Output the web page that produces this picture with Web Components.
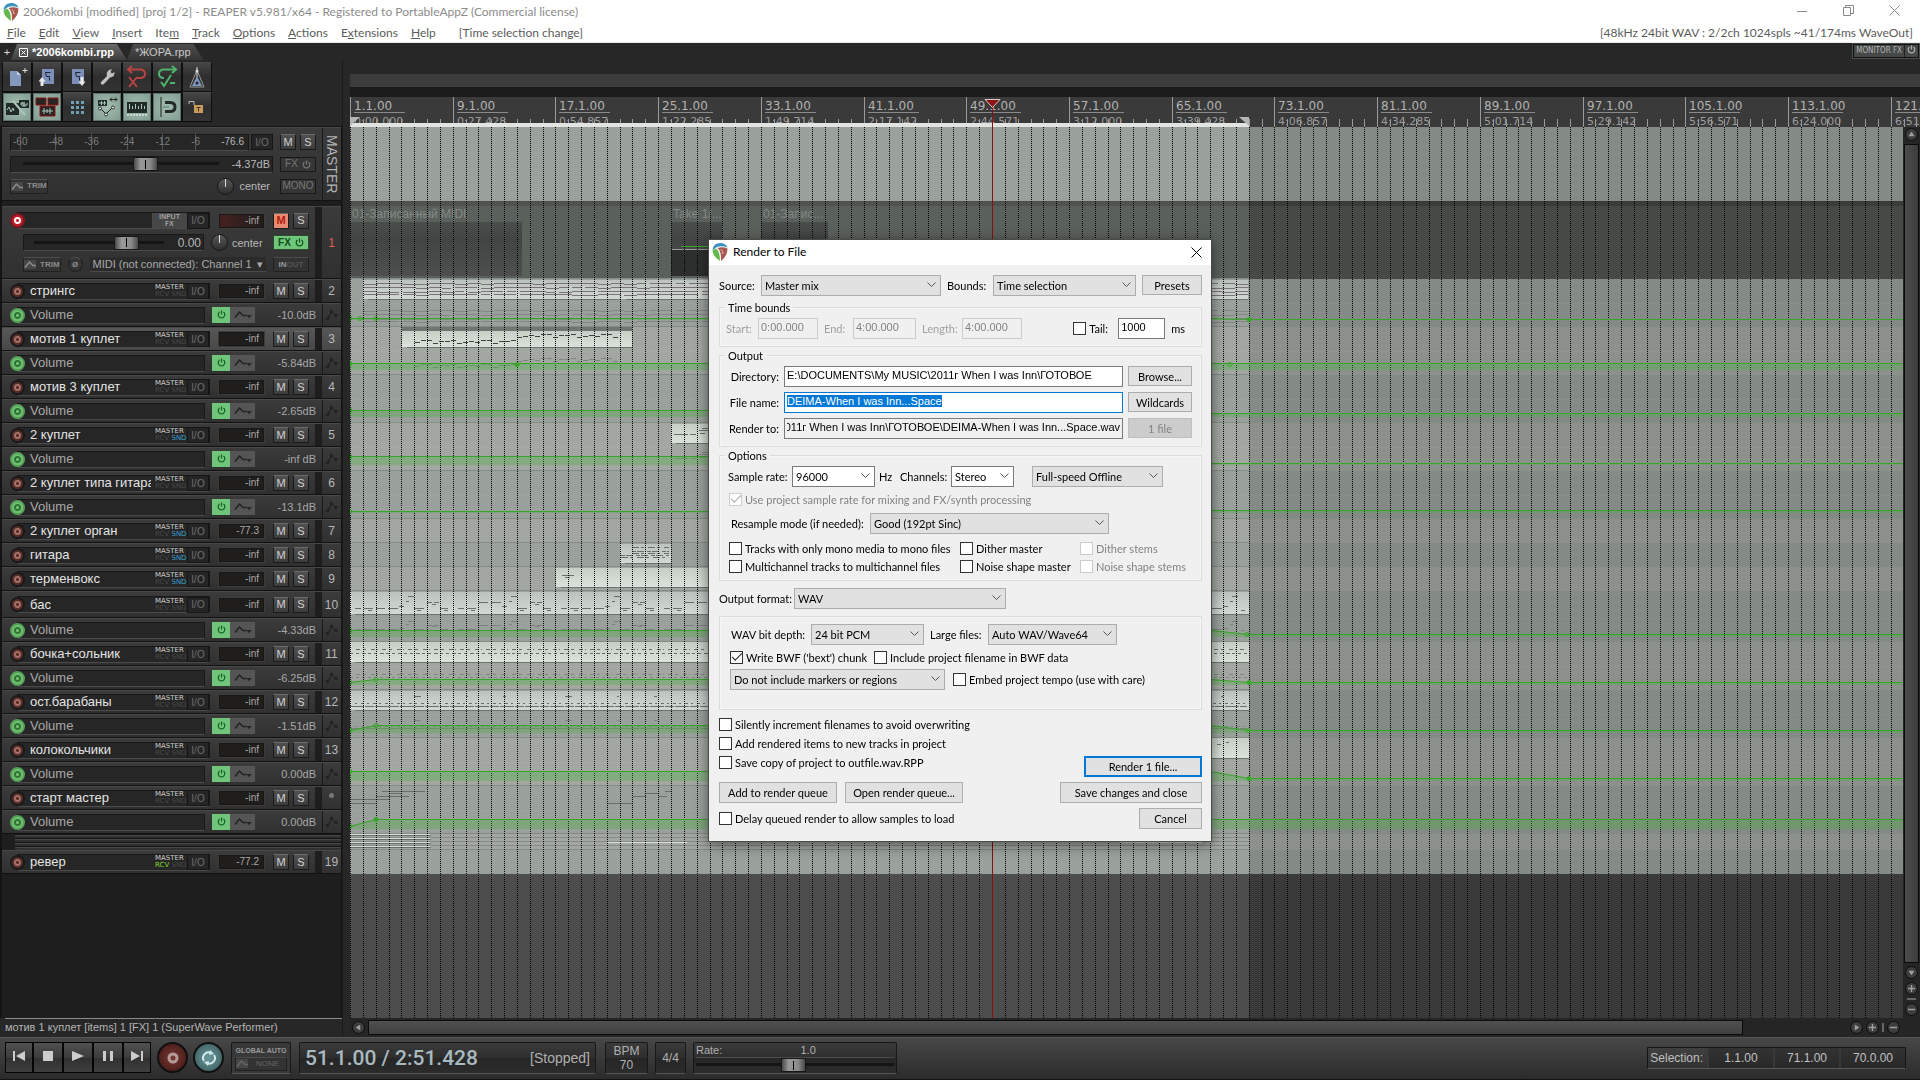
<!DOCTYPE html>
<html lang="en">
<head>
<meta charset="utf-8">
<title>REAPER - Render to File</title>
<style>
  html, body { height: 100%; margin: 0; }
  body { background: #272727; font-family: "Liberation Sans", sans-serif; overflow: hidden; }
</style>
</head>
<body>
<daw-app></daw-app>

<script>
// ---------- project data ----------
const BAR_STEP = 12.84;
const SEL_END = 899;         // px, end of the time selection
const CURSOR_X = 642;

const TRACKS = [
  { n: 1, h: 73, first: true },
  { n: 2, name: 'стрингс', env: { value: '-10.0dB', y: 15, right: 16, floor: 17, dots: [[0, 15], [10, 15], [26, 15], [899, 16, 1]] } },
  { n: 3, name: 'мотив 1 куплет', selected: true, env: { value: '-5.84dB', y: 12, right: 12, floor: 19, dots: [[0, 12, 1], [167, 13, 1], [880, 13]] } },
  { n: 4, name: 'мотив 3 куплет', env: { value: '-2.65dB', y: 11, right: 14, floor: 18, dots: [[0, 11]] } },
  { n: 5, name: '2 куплет', route: 'snd', env: { value: '-inf dB', y: 9, right: 16, floor: 18, dots: [[0, 9]] } },
  { n: 6, name: '2 куплет типа гитара', env: { value: '-13.1dB', y: 16, right: 15, floor: 18, dots: [[0, 16]] } },
  { n: 7, name: '2 куплет орган', route: 'snd', meter: '-77.3' },
  { n: 8, name: 'гитара', route: 'snd' },
  { n: 9, name: 'терменвокс', route: 'snd' },
  { n: 10, name: 'бас', h: 27, env: { value: '-4.33dB', y: 12, right: 16, floor: 19, dots: [[0, 12], [897, 16]] } },
  { n: 11, name: 'бочка+сольник', env: { value: '-6.25dB', start: 16, y: 13, right: 16, floor: 19, dots: [[0, 16], [26, 13], [899, 16, 1]] } },
  { n: 12, name: 'ост.барабаны', env: { value: '-1.51dB', start: 16, y: 11, right: 16, floor: 19, dots: [[0, 16, 1], [26, 11], [898, 16]] } },
  { n: 13, name: 'колокольчики', env: { value: '0.00dB', y: 9, right: 16, floor: 19, dots: [[0, 9], [899, 16, 1]] } },
  { n: '', name: 'старт мастер', folder: true, env: { value: '0.00dB', start: 16, y: 9, right: 9, floor: 19, dots: [[0, 16], [26, 9, 1]] } },
  { collapsed: true, h: 16 },
  { n: 19, name: 'ревер', route: 'rcv', meter: '-77.2' }
];

// ---------- shared pieces ----------
const LOGO = `<svg width="16" height="20" viewBox="0 0 16 20">
  <path d="M.5 7Q2 1 8 1Q14 1 15.500 5.500Q10 3.500 5 5L1 8Z" fill="#3b93c4"/>
  <path d="M.500 8.500L4 6.500Q8 9 8 19Q.5 14 .5 8.500Z" fill="#62b84a"/>
  <path d="M5.500 6Q11 4.500 15.500 6.500Q15.500 14 9 19Q9.500 9 5.500 6Z" fill="#a8584e"/>
  <path d="M9 7.500Q11 9 11 12" stroke="#e4c9c4" fill="none"/></svg>`;
const POWER = `<svg width="9" height="9" viewBox="0 0 9 9" fill="none" stroke="currentColor" stroke-width="1.200"><path d="M2.500 2A3.300 3.300 0 1 0 6.500 2M4.500 .5V4.500"/></svg>`;
const SHAPE = `<svg width="12" height="9" viewBox="0 0 12 9" fill="none" stroke="currentColor" stroke-width="1.500"><path d="M1 7.500L5.500 2L9 5.500H12"/></svg>`;
const NODES = `<svg width="12" height="12" viewBox="0 0 12 12" fill="none" stroke="#1c1c1c"><path d="M.5 8.500h2v2h-2zM4.500 1.500h2v2h-2zM9 5.500h2v2H9zM2.500 8.500L5 4M7 4L9 6"/></svg>`;

class UiElement extends HTMLElement {
  constructor() {
    super();
    this.attachShadow({ mode: 'open' });
  }
  connectedCallback() {
    this.shadowRoot.innerHTML = `
      <style>
        * { box-sizing: border-box; }
        button, input, select { font: inherit; color: inherit; margin: 0; }
        button { padding: 0; cursor: pointer; white-space: nowrap; }
        ${this.css()}
      </style>
      ${this.html()}`;
    this.ready();
  }
  css() { return ':host { display: block; }'; }
  html() { return '<slot></slot>'; }
  ready() {}
}

// ---------- window chrome ----------
class TitleBar extends UiElement {
  css() {
    return `
      :host { display: flex; align-items: center; height: 23px; padding: 0 3px; gap: 4px; background: #fff; color: #8c8c8c; font: 12px/16px "Lato", sans-serif; }
      span { flex: 1; }
      div { display: flex; }
      button { width: 46px; height: 20px; border: 0; background: none; color: #8a8a8a; }`;
  }
  html() {
    return `${LOGO}<span><slot></slot></span><div>
      <button aria-label="Minimize"><svg width="11" height="11" stroke="currentColor"><path d="M0 6.500H10"/></svg></button>
      <button aria-label="Restore"><svg width="11" height="11" stroke="currentColor" fill="none"><path d="M.5 2.500h7v8h-7zM2.500 2.500v-2h8v8h-3"/></svg></button>
      <button aria-label="Close"><svg width="11" height="11" stroke="currentColor"><path d="M.5 .5L10.500 10.500M10.500 .5L.5 10.500"/></svg></button></div>`;
  }
}

class MenuBar extends UiElement {
  css() {
    return `
      :host { display: flex; justify-content: space-between; height: 20px; padding: 0 7px; background: #fff; color: #5c5c5c; font: 12px/20px "Lato", sans-serif; border-bottom: 1px solid #e8eae8; }
      nav { display: flex; gap: 13px; }
      a { color: inherit; text-decoration: none; }
      span { margin-left: 10px; }`;
  }
  html() {
    const items = ['<u>F</u>ile', '<u>E</u>dit', '<u>V</u>iew', '<u>I</u>nsert', 'Ite<u>m</u>', '<u>T</u>rack', '<u>O</u>ptions', '<u>A</u>ctions', 'E<u>x</u>tensions', '<u>H</u>elp'];
    return `<nav>${items.map(i => `<a href="#">${i}</a>`).join('')}<span>[Time selection change]</span></nav>
      <div>[48kHz 24bit WAV : 2/2ch 1024spls ~41/174ms WaveOut]</div>`;
  }
}

class ProjectTabs extends UiElement {
  css() {
    return `
      :host { display: flex; height: 17px; padding: 1px 1px 0 3px; background: #272727; color: #c9c9c9; font: 11px/15px "Liberation Sans", sans-serif; }
      .add { border: 0; background: none; color: #ddd; width: 8px; }
      .tab { border: 0; height: 16px; display: flex; align-items: center; gap: 4px; padding: 0 13px 0 8px; background: linear-gradient(#4c4c4c, #363636); clip-path: polygon(6px 0, calc(100% - 10px) 0, 100% 100%, 0 100%); }
      .tab.on { background: linear-gradient(#6a6a6a, #3e3e3e); color: #fff; font-weight: bold; }
      .mon { margin-left: auto; display: flex; height: 14px; background: #454948; border: 1px solid #101010; outline: 1px solid #4a4f4c; color: #b4b4b4; font: 8px/12px "DejaVu Sans Condensed", "DejaVu Sans", sans-serif; }
      .mon button { border: 0; background: none; padding: 0 2px; }
      .mon button + button { border-left: 1px solid #222; }`;
  }
  html() {
    return `<button class="add">+</button>
      <button class="tab on"><svg width="9" height="9" stroke="#fff" fill="none"><path d="M.5 .5h8v8h-8zM2.500 2.500l4 4M6.500 2.500l-4 4"/></svg>*2006kombi.rpp</button>
      <button class="tab">*ЖОРА.rpp</button>
      <div class="mon"><button>MONITOR FX</button><button aria-label="Bypass monitor FX">${POWER}</button></div>`;
  }
}

// ---------- main toolbar ----------
class ToolBar extends UiElement {
  css() {
    return `
      :host { display: grid; grid-template-columns: repeat(7, 30px); grid-auto-rows: 30px; padding: 2px 0 4px 2px; }
      button { display: grid; place-items: center; border: 1px solid #0e0e0e; border-top-color: #4a4a4a; background: linear-gradient(#454545, #2e2e2e 50%, #333); }
      .on { border: 1px solid #5f736b; margin: 1px; outline: 1px solid #0e0e0e; background: radial-gradient(#a3bdb2, #829d92); }
      svg { display: block; }`;
  }
  html() {
    const doc = '<path d="M7 4h12v15H7z" fill="#7b8fb8"/><path d="M10.500 7.500h5M10.500 7.500l1 4h3v4" stroke="#1d2433" fill="none"/>';
    const icons = [
      ['New project', 0, '<path d="M5 6h7l4 4v11H5z" fill="#8497bd"/><path d="M12 6v4h4z" fill="#c3cfe6"/><path d="M20 3v5M17.500 5.500h5" stroke="#ddd"/>'],
      ['Open project', 0, doc + '<path d="M7 12L10.500 16.500H8.500V21H5.500V16.500H3.500Z" fill="#e8e8e8"/>'],
      ['Save project', 0, doc + '<path d="M17 21L13.500 16.500H15.500V12H18.500V16.500H20.500Z" fill="#e8e8e8"/>'],
      ['Project settings', 0, '<path d="M6 17L12 11Q10.500 7 15 4.500L17 4.500L15.500 7L17 8.500L19.500 7Q20 12 15 12.500L8.500 19.500Q5 20 6 17Z" fill="#c0c0c0"/>'],
      ['Undo', 0, '<path d="M3 4.500H15Q20 4.500 20 9Q20 13 15 13H12M7 1L3 4.500L7 8" stroke="#b94343" stroke-width="2" fill="none"/><path d="M4 12L12 22M12 12L4 22" stroke="#b94343" stroke-width="2"/>'],
      ['Redo', 0, '<path d="M21 4.500H9Q4 4.500 4 9Q4 13 9 13M17 1L21 4.500L17 8" stroke="#4fb56d" stroke-width="2" fill="none"/><path d="M6 17L9 21L16 10M15 18H20" stroke="#4fb56d" stroke-width="2" fill="none"/>'],
      ['Metronome', 0, '<path d="M12 5L5 22H19Z" fill="none" stroke="#999"/><path d="M12 11L7 21H17Z" fill="#8095c0"/><path d="M12 2V12" stroke="#ddd"/><circle cx="12" cy="6" r="1.500" fill="#ddd"/><circle cx="12" cy="18" r="1.500" fill="#222"/>'],
      ['Auto crossfade', 1, '<path d="M1 8h13v12H1zM14 5h10v8H14z" fill="#232b28"/><path d="M8 6L20 20" stroke="#a9c6ba" stroke-width="2"/><path d="M2 15l2-3l2 5l2-4l1 3M15 9h2v-2v4h2v-4v4h2v-2h2" stroke="#a9c6ba" fill="none"/>'],
      ['Item grouping', 1, '<path d="M1 3h10v7H1zM13 3h10v7H13zM5 11h15v10H5z" fill="#2a2323" stroke="#8a1515"/><path d="M7 16h11M9 13v6M12 14v4M15 13v6" stroke="#a8c8bb"/>'],
      ['Grid lines', 0, '<path d="M6 6h3v3H6zM11 6h3v3h-3zM16 6h3v3h-3zM6 11h3v3H6zM11 11h3v3h-3zM16 11h3v3h-3zM6 16h3v3H6zM11 16h3v3h-3zM16 16h3v3h-3z" fill="#6d9fb2"/>'],
      ['Move envelope points', 1, '<path d="M3 5h9v6H3z" fill="#232b28"/><path d="M4 8h7M6.500 6v4M9.500 6v4" stroke="#a8c8bb"/><path d="M15 4.500h7M17 2.500l-2 2l2 2M20 2.500l2 2l-2 2M6 14L11 19L17 13" stroke="#222" fill="none"/><g fill="#dfe8e4" stroke="#333"><circle cx="5" cy="13.500" r="1.500"/><circle cx="11" cy="19.500" r="1.500"/><circle cx="18" cy="12.500" r="1.500"/></g>'],
      ['Ripple editing', 1, '<path d="M2 7h20v11H2z" fill="#232b28"/><path d="M4.500 9v5M7.500 11v3M10.500 9v5M13.500 11v3M16.500 9v5M19.500 11v3" stroke="#a8c8bb"/><path d="M2 20h20" stroke="#fff" stroke-dasharray="2 1"/>'],
      ['Snap', 1, '<path d="M6 2V22" stroke="#222" stroke-width="1"/><path d="M10 7.500H15Q20 7.500 20 12Q20 16.500 15 16.500H10" stroke="#232b28" stroke-width="3" fill="none"/><path d="M8 12h6" stroke="#4e7a68"/>'],
      ['Lock', 0, '<path d="M4 9V6.500H9V10" stroke="#b9b9b9" fill="none"/><path d="M9 10h9v8H9z" fill="#c79b5c"/><path d="M11.500 12.500h4M13.500 12.500v4" stroke="#4a3415"/>']
    ];
    return icons.map(([label, on, body]) =>
      `<button class="${on ? 'on' : ''}" aria-label="${label}" aria-pressed="${!!on}"><svg width="24" height="24" viewBox="0 0 24 24">${body}</svg></button>`).join('');
  }
}

// ---------- track control panel ----------
const STRIP_CSS = `
  :host { display: flex; font: 12px/16px "Liberation Sans", sans-serif; color: #b8b8b8; background: linear-gradient(#3b3b3b, #303030); border-top: 1px solid #484848; border-bottom: 1px solid #121212; }
  .arm { width: 15px; height: 15px; flex: none; border-radius: 50%; border: 2px solid #191919; background: radial-gradient(circle, #5a2c28 0 1px, #a4706a 2px, #a4706a 3px, #5a2c28 4px); }
  .arm.live { background: radial-gradient(circle, #c81d2c 0 1px, #fff 2px, #fff 3px, #c81d2c 4px); border-color: #7c1820; }
  .arm.env { background: radial-gradient(circle, #6fc16f 0 1px, #2f7434 2px, #2f7434 3px, #6fc16f 4px); border-color: #57a35a; }
  .box { background: #262626; border: 1px solid #181818; border-bottom-color: #4b4b4b; height: 17px; display: flex; align-items: center; }
  .io { width: 22px; height: 16px; border: 1px solid #161616; background: #252525; color: #6f6f6f; font-size: 10px; line-height: 13px; }
  .sq { width: 16px; height: 16px; border: 1px solid #1a1a1a; border-top-color: #6a6a6a; background: linear-gradient(#505050, #3c3c3c); font: 11px/13px "Liberation Sans", sans-serif; color: #d0d0d0; }
  .meter { width: 47px; height: 16px; border: 2px solid #171717; outline: 1px solid #3f3b39; outline-offset: -1px; background: #201e1d; text-align: right; padding-right: 4px; font-size: 10px; line-height: 12px; color: #a8a8a8; }
  .route { width: 32px; font: 7px/7px "DejaVu Sans", sans-serif; color: #cfcfcf; }
  .route i { font-style: normal; color: #484848; }
  .route i.snd { color: #3b9fd0; } .route i.rcv { color: #7fd92b; }
  .chip { display: inline-flex; align-items: center; border: 1px solid #202020; border-top-color: #4c4c4c; height: 15px; background: #333; color: #8c8c8c; font: bold 8px/12px "Liberation Sans", sans-serif; padding: 0; gap: 4px; }
  .chip svg { background: #474747; }
  .fader { flex: 1; min-width: 0; appearance: none; height: 14px; background: linear-gradient(#0000 5px, #151515 5px, #151515 8px, #0000 8px); }
  .fader::-webkit-slider-thumb { appearance: none; width: 25px; height: 14px; border: 1px solid #161616; background: linear-gradient(#000, #000) center / 1px 9px no-repeat, linear-gradient(90deg, #4a4a4a, #9a9a9a 30%, #8a8a8a 70%, #4a4a4a); }
  .knob { width: 17px; height: 17px; border-radius: 50%; flex: none; border: 1px solid #161616; background: linear-gradient(90deg, #0000 7px, #ddd 7px, #ddd 8px, #0000 8px) top / 100% 8px no-repeat, linear-gradient(#585858, #2e2e2e); }
  .row { display: flex; align-items: center; }
  .small { font-size: 11px; }
`;

class MasterTrack extends UiElement {
  css() {
    return STRIP_CSS + `
      :host { height: 74px; }
      .body { flex: 1; display: flex; flex-direction: column; gap: 6px; padding: 6px 6px 0 8px; }
      .row { gap: 7px; height: 16px; }
      .scale { flex: 1; justify-content: space-between; padding: 0 4px 0 2px; font-size: 10px; color: #7d7d7d; }
      .scale span { background: linear-gradient(#555, #555) center / 1px 100% no-repeat; }
      .scale b { font-weight: normal; color: #b8b8b8; }
      .vol { flex: 1; padding: 0 2px 0 12px; gap: 12px; }
      .side { width: 36px; height: 15px; border: 1px solid #191919; background: #363636; color: #777; font: 10px/12px "Liberation Sans", sans-serif; display: flex; gap: 4px; justify-content: center; align-items: center; }
      .pan { margin-left: auto; gap: 5px; padding-right: 3px; }
      .label { width: 19px; border-left: 1px solid #191919; writing-mode: vertical-rl; text-align: center; font-size: 14px; line-height: 18px; color: #b4b4b4; }`;
  }
  html() {
    const marks = ['-60', '-48', '-36', '-24', '-12', '-6'].map(m => `<span>${m}</span>`).join('');
    return `<div class="body">
      <div class="row"><div class="row" style="flex:1;gap:2px"><div class="box scale">${marks}<b>-76.6</b></div><button class="io">I/O</button></div>
        <div class="row" style="gap:4px;width:36px"><button class="sq">M</button><button class="sq">S</button></div></div>
      <div class="row"><div class="box vol"><input class="fader" type="range" min="0" max="100" value="64" aria-label="Master volume"><span class="small">-4.37dB</span></div>
        <button class="side">FX ${POWER}</button></div>
      <div class="row"><button class="chip">${SHAPE}TRIM</button><div class="row pan small"><span class="knob"></span>center</div><button class="side">MONO</button></div>
      </div><div class="label">MASTER</div>`;
  }
}

class ArmedTrack extends UiElement {
  css() {
    return STRIP_CSS + `
      :host { height: 73px; margin-top: 5px; }
      .body { flex: 1; min-width: 0; display: flex; flex-direction: column; gap: 5px; padding: 5px 6px 0 8px; }
      .row { height: 17px; }
      .name { flex: 1; margin-left: -8px; height: 17px; justify-content: flex-end; }
      .fx { width: 35px; height: 15px; border: 0; background: #474747; color: #c0c0c0; font: 7px/7px "DejaVu Sans", sans-serif; }
      .arm { position: relative; }
      .mute { background: #e98b73; color: #b0200c; font-weight: bold; }
      .green { display: flex; align-items: center; justify-content: space-evenly; width: 36px; height: 15px; border: 1px solid #2c4a2e; background: #6fc57a; color: #0f4d1a; font: bold 10px/13px "Liberation Sans", sans-serif; padding: 0; }
      .midi { flex: 1; display: flex; justify-content: space-between; border: 0; background: #2b2b2b; font: 11px/15px "Liberation Sans", sans-serif; color: #a9a9a9; padding: 0 3px; height: 15px; border-bottom: 1px solid #4b4b4b; }
      .num { width: 26px; border-left: 7px solid #1e1e1e; color: #e05c52; display: flex; align-items: center; justify-content: center; }
      .inout { width: 36px; justify-content: center; color: #999; }`;
  }
  html() {
    return `<div class="body">
      <div class="row"><span class="arm live"></span><div class="box name"><button class="fx">INPUT<br>FX</button><button class="io">I/O</button></div>
        <div class="meter" style="margin:0 8px;background:linear-gradient(90deg,#452020,#201e1d)">-inf</div><button class="sq mute">M</button><button class="sq" style="margin-left:4px">S</button></div>
      <div class="row" style="padding-left:13px"><div class="box" style="flex:1;padding:0 2px 0 10px"><input class="fader" type="range" min="0" max="100" value="76" aria-label="Track volume"><span style="padding-left:14px">0.00</span></div>
        <span class="knob" style="margin:0 4px 0 7px"></span><span class="small" style="width:41px">center</span><button class="green">FX ${POWER}</button></div>
      <div class="row" style="padding-left:13px;gap:7px"><button class="chip">${SHAPE}TRIM</button><button class="chip" style="border-radius:8px;width:15px;justify-content:center" aria-label="Phase">Ø</button>
        <button class="midi"><span>MIDI (not connected): Channel 1</span><span>▾</span></button><button class="chip inout">IN<span style="color:#555;margin-left:-4px">OUT</span></button></div>
      </div><div class="num">1</div>`;
  }
}

class TrackRow extends UiElement {
  css() {
    return STRIP_CSS + `
      :host { height: 24px; align-items: stretch; }
      :host([tall]) { height: 27px; }
      :host([selected]) { background: linear-gradient(#575757, #484848); }
      .body { flex: 1; min-width: 0; display: flex; align-items: center; padding-left: 8px; }
      .arm { position: relative; }
      .name { flex: 1; min-width: 0; margin-left: -8px; padding-left: 12px; color: #e4e4e4; font-size: 13px; }
      .name span { flex: 1; overflow: hidden; white-space: nowrap; margin-right: 4px; }
      .meter { margin: 0 8px; }
      .s { margin: 0 6px 0 4px; }
      .num { width: 26px; border-left: 7px solid #1e1e1e; display: flex; align-items: center; justify-content: center; font-size: 12px; }
      .dot { width: 5px; height: 5px; border-radius: 50%; background: #777; margin-bottom: 6px; }`;
  }
  html() {
    const a = n => this.getAttribute(n) || '';
    const route = a('route');
    return `<div class="body"><span class="arm"></span>
      <div class="box name"><span>${a('name')}</span><div class="route">MASTER<br><i class="${route === 'rcv' ? 'rcv' : ''}">RCV</i> <i class="${route === 'snd' ? 'snd' : ''}">SND</i></div><button class="io">I/O</button></div>
      <div class="meter">${a('meter') || '-inf'}</div><button class="sq">M</button><button class="sq s">S</button></div>
      <div class="num">${a('number') || '<span class="dot"></span>'}</div>`;
  }
}

class EnvelopeRow extends UiElement {
  css() {
    return STRIP_CSS + `
      :host { height: 24px; align-items: stretch; }
      .body { flex: 1; display: flex; align-items: center; padding-left: 8px; color: #a8a8a8; }
      .name { width: 188px; margin-left: -8px; padding-left: 12px; font-size: 13px; }
      .arm { position: relative; }
      .on { margin-left: 7px; width: 18px; height: 16px; border: 0; background: #6fc57a; color: #14601f; }
      .mode { width: 25px; height: 16px; border: 0; background: #555; color: #222; }
      output { margin-left: auto; padding-right: 6px; font-size: 11px; }
      .num { width: 19px; border-left: 1px solid #191919; display: grid; place-items: center; }`;
  }
  html() {
    return `<div class="body"><span class="arm env"></span><div class="box name">Volume</div>
      <button class="on" aria-label="Bypass envelope">${POWER}</button><button class="mode" aria-label="Automation mode">${SHAPE}<svg width="6" height="5"><path d="M0 1h6L3 4z" fill="#222"/></svg></button>
      <output>${this.getAttribute('value')}</output></div><div class="num">${NODES}</div>`;
  }
}

class TrackPanel extends UiElement {
  css() {
    return `
      :host { display: flex; flex-direction: column; background: #1e1e1e; border: 1px solid #141414; border-width: 1px 1px 0 2px; }
      .folded { height: 16px; margin-left: 13px; background: repeating-linear-gradient(#141414 0 1px, #484848 1px 2px, #303030 2px 4px); }`;
  }
  html() {
    return '<master-track></master-track>' + TRACKS.map(t => {
      if (t.first) return '<armed-track></armed-track>';
      if (t.collapsed) return '<div class="folded"></div>';
      return `<track-row number="${t.n}" name="${t.name}" route="${t.route || ''}" meter="${t.meter || ''}" ${t.h ? 'tall' : ''} ${t.selected ? 'selected' : ''}></track-row>` +
        (t.env ? `<envelope-row value="${t.env.value}"></envelope-row>` : '');
    }).join('');
  }
}

// ---------- timeline ----------
class TimeRuler extends UiElement {
  css() {
    return `
      :host { display: block; padding-top: 14px; background: #272727; }
      .lane { height: 13px; background: #3c3c3c; }
      .gap { height: 10px; background: #1b1b1b; }
      svg { display: block; width: 100%; height: 30px; background: #3a3a3a; font-family: "DejaVu Sans", sans-serif; }`;
  }
  html() {
    let s = '';
    for (let i = 0; i <= 15; i++) {
      const x = Math.round(i * BAR_STEP * 8);
      const ms = Math.floor(i * 192000 / 7);
      const time = `${Math.floor(ms / 60000)}:${String(Math.floor(ms / 1000) % 60).padStart(2, '0')}.${String(ms % 1000).padStart(3, '0')}`;
      s += `<text x="${x + 4}" y="13" font-size="12" fill="#b2b2b2">${i * 8 + 1}.1.00</text>
        <path d="M${x + 4} 15.500h51" stroke="#8a8a8a"/>
        <text x="${x + 4}" y="28" font-size="11" fill="#9a9a9a">${time}</text>
        <path d="M${x + .5} 0V30" stroke="#9a9a9a"/>`;
    }
    for (let i = 0; i < 130; i++) s += `<path d="M${Math.round(i * BAR_STEP) + .5} 22V30" stroke="#9a9a9a"/>`;
    s += `<rect y="26" width="${SEL_END}" height="4" fill="#e2e4e2"/>
      <path d="M0 20h10L0 29z" fill="#b5b5b5"/><path d="M${SEL_END} 20h-10l10 9z" fill="#b5b5b5"/>
      <path d="M${CURSOR_X + .5} 4V30" stroke="#8c0f0f"/><path d="M${CURSOR_X - 7} 2.500h15l-7.500 8z" fill="#8c1515" stroke="#d8c8c8"/>`;
    return `<div class="lane"></div><div class="gap"></div><svg>${s}</svg>`;
  }
}

class ArrangeView extends UiElement {
  css() {
    return `
      :host { display: block; min-width: 0; min-height: 0; overflow: hidden; background: #3a3a3a; }
      svg { display: block; width: 100%; height: 100%; font-family: "Liberation Sans", sans-serif; }`;
  }
  rect(x, y, w, h, fill, extra = '') { return `<rect x="${x}" y="${y}" width="${w}" height="${h}" fill="${fill}" ${extra}/>`; }
  item(x, y, w, h, light) {
    return this.rect(x, y, w, h, light ? 'url(#itemB)' : 'url(#itemA)') + this.rect(x + 5, y + h, w - 5, 1, '#6d736f');
  }
  dash(y, x0, x1, pattern) {
    return `<path d="M${x0} ${y + .5}H${x1}" stroke="#69706c" stroke-dasharray="${pattern}"/>`;
  }
  strings(y) {
    const rows = [4, 8, 12, 15];
    let s = '', seed = 7;
    for (let i = 0; i < 68; i++) {
      for (const r of rows) {
        seed = (seed * 73 + 41) % 997;
        const dy = seed % 4 === 0 ? 1 : 0;
        const len = seed % 5 === 0 ? 9 : 13;
        s += `M${14 + i * 13} ${r + dy + y + .5}h${len}`;
      }
    }
    return `<path d="${s}" stroke="#7a7377"/>`;
  }
  melody(y) {
    let s = '';
    for (let i = 0; i < 34; i++) {
      const x = 65 + i * 6;
      const base = i > 16 ? 3 : 9;
      const dy = [2, 0, 0, 3, 1, 1, 0, 3, 2, 1][i % 10];
      s += `M${x} ${y + base + dy + .5}h5`;
    }
    return `<path d="${s}" stroke="#3e4441"/>`;
  }
  bass(y, k) {
    const seg = [[5, 6, 17], [14, 9, 17], [18, 4, 19], [26, 9, 17], [38, 10, 17], [49, 5, 15], [56, 3, 10], [58, 6, 5], [64, 10, 17], [67, 4, 19], [77, 5, 11], [84, 5, 11], [82, 4, 13], [90, 8, 17], [94, 4, 19]];
    let s = '';
    for (let p = 0; p < 9; p++) for (const [x, w, dy] of seg) {
      const yy = p % 2 && dy === 17 && x > 20 && x < 60 ? 11 : dy;
      if (x + p * 103 + w < 897) s += `M${x + p * 103} ${y + Math.round(yy * k) + .5}h${w}`;
    }
    return `<path d="${s}" stroke="#69706c"/>`;
  }
  html() {
    const W = 4000;
    let s = `<defs>
      <linearGradient id="itemA" x2="0" y2="1"><stop stop-color="#bcc3bf"/><stop offset="1" stop-color="#d2d8d3"/></linearGradient>
      <linearGradient id="itemB" x2="0" y2="1"><stop stop-color="#c6cec6"/><stop offset="1" stop-color="#dbe2da"/></linearGradient>
      <linearGradient id="muted" x2="0" y2="1"><stop stop-color="#4a4d4b"/><stop offset=".3" stop-color="#414442"/><stop offset="1" stop-color="#4c4f4d"/></linearGradient></defs>`;
    s += this.rect(0, 0, W, 74, '#848a85') + this.rect(0, 0, SEL_END, 74, '#9aa09b');
    s += this.rect(0, 74, W, 5, '#3a3c3a') + this.rect(0, 74, SEL_END, 5, '#4f524f');
    // lanes
    let y = 79, odd = 0, over = '';
    const top = {};
    TRACKS.forEach(t => {
      const h = t.h || 24, full = h + (t.env ? 24 : 0);
      top[t.n || (t.collapsed ? 'fold' : 'start')] = y;
      const c = t.first ? ['#454a46', '#5a605c'] : odd ? ['#8c928b', '#a2a8a1'] : ['#848a85', '#9aa09b'];
      s += this.rect(0, y, W, full, c[0]) + this.rect(0, y, SEL_END, full, c[1]);
      if (!t.first) s += this.rect(0, y - 1, SEL_END, 1, '#858b86');
      if (t.env) {
        const e = t.env, by = y + h, first = (e.start || e.y);
        const ramp = e.dots.some(d => d[0] > 890) ? [860, SEL_END] : [600, 610];
        s += this.rect(0, by, W, 1, '#ffffff', 'opacity=".05"');
        over += `<path d="M0 ${by + first}L26 ${by + e.y}H${ramp[0]}L${ramp[1]} ${by + e.right}H${W}V${by + e.floor}H0Z" fill="#4fb046" opacity=".36"/>
          <path d="M0 ${by + first + .5}L26 ${by + e.y + .5}H${ramp[0]}L${ramp[1]} ${by + e.right + .5}H${W}" stroke="#36a528" fill="none"/>`;
        e.dots.forEach(([x, dy, fill]) => {
          over += `<circle cx="${x}" cy="${by + dy + .5}" r="2" stroke="#36a528" fill="${fill ? '#36a528' : 'none'}"/>`;
        });
      }
      if (!t.first) odd ^= 1;
      y += full;
    });
    const end = y;
    s += this.rect(0, end, SEL_END, 2000, '#4d4d4d');
    // muted items on track 1
    s += this.rect(0, 95, 172, 54, 'url(#muted)') + this.rect(321, 95, 51, 54, 'url(#muted)') + this.rect(411, 95, 67, 54, 'url(#muted)');
    s += this.rect(321, 122, 50, 27, '#2d2f2e') + this.rect(331, 119, 40, 1, '#36a528') + this.rect(321, 122, 50, 1, '#9a9a9a');
    s += ['01-Записанный MIDI', 'Take 1/...', '01-Запис...'].map((t, i) => `<text x="${[2, 323, 413][i]}" y="91" font-size="12" fill="#858a86">${t}</text>`).join('');
    // midi items
    s += this.item(13, top[2] + 1, 257, 19) + this.item(271, top[2] + 1, 627, 19) + this.strings(top[2]) + `<g opacity=".6">${this.strings(top[2] + 27)}</g>`;
    s += this.rect(52, top[3], 230, 4, '#6e7671') + this.item(52, top[3] + 4, 230, 16, 1) + this.melody(top[3] + 4) + `<g opacity=".35">${this.melody(top[3] + 28)}</g>`;
    s += this.item(321, top[5] + 1, 90, 19, 1) + `<g id="lead"><path d="M324 ${top[5] + 11.5}h14M340 ${top[5] + 11.500}h6M350 ${top[5] + 10.500}h5M349 ${top[5] + 7.500}h9M352 ${top[5] + 5.500}h8" stroke="#69706c"/></g><use href="#lead" y="24" opacity=".6"/>`;
    s += this.item(270, top[8] + 1, 51, 19);
    [4, 8, 10, 12, 14].forEach((d, i) => { s += this.dash(top[8] + d, i < 3 ? 282 : 271, 319, i % 2 ? '4 1 7 3' : '7 2 3 4'); });
    s += this.item(206, top[9] + 1, 500, 19, 1) + `<path d="M212 ${top[9] + 8.500}h12M215 ${top[9] + 10.500}h5" stroke="#69706c"/>`;
    s += this.item(0, top[10] + 1, SEL_END, 22) + this.bass(top[10], 1) + `<g opacity=".6">${this.bass(top[10] + 26, .7)}</g>`;
    s += this.item(0, top[11], SEL_END, 20, 1) + this.dash(top[11] + 7, 6, 897, '4 3 3 5 4 2 1 4') + this.dash(top[11] + 11, 0, 897, '3 3 3 3 4 2');
    s += `<g opacity=".6">${this.dash(top[11] + 32, 6, 897, '4 3 3 5 4 2 1 4')}${this.dash(top[11] + 35, 0, 897, '3 3')}</g>`;
    s += this.item(0, top[12] + 1, SEL_END, 19) + this.dash(top[12] + 6, 64, 897, '7 45 2 35 3 59') + this.dash(top[12] + 13, 5, 897, '2 4 3 3') + this.dash(top[12] + 16, 0, 897, '14 1 9 1');
    s += `<g opacity=".6">${this.dash(top[12] + 30, 64, 897, '7 45 2 35 3 59')}${this.dash(top[12] + 36, 5, 897, '2 4 3 3')}${this.dash(top[12] + 38, 0, 897, '14 1 9 1')}</g>`;
    s += this.item(760, top[13], 139, 20, 1) + `<path d="M867 ${top[13] + 6.500}h4M876 ${top[13] + 4.500}h3M858 ${top[13] + 9.500}h2" stroke="#69706c"/>`;
    const st = top.start;
    s += `<path d="M32 ${st + 5.500}h43M39 ${st + 7.500}h13M26 ${st + 10.500}h33M0 ${st + 13.500}h39M0 ${st + 17.500}h26M257 ${st + 17.500}h25M283 ${st + 10.500}h13M296 ${st + 7.500}h13M309 ${st + 10.500}h8M315 ${st + 5.500}h6" stroke="#69706c"/>`;
    for (let i = 0; i < 4; i++) {
      const fy = top.fold + i * 4;
      s += this.rect(0, fy + 3, SEL_END, 1, '#858b86') + this.rect(0, fy, 80, 1, '#d8ddd8') + this.rect(0, fy + 1, 81, 1, '#69706c');
    }
    s += this.rect(257, top.fold + 8, 80, 1, '#d8ddd8') + this.rect(770, top.fold + 8, 82, 1, '#d8ddd8');
    // grid
    for (let i = 0; i < 300; i++) {
      s += `<path d="M${Math.round(i * BAR_STEP) + .5} 0V2000" stroke="#000" stroke-dasharray="1 1"/>`;
    }
    s += over + this.rect(CURSOR_X, 0, 1, 2000, '#8c0f0f');
    return `<svg>${s}</svg>`;
  }
}

class ScrollStrip extends UiElement {
  css() {
    return `
      :host { display: flex; align-items: center; gap: 3px; background: #252525; padding: 0 3px 0 2px; height: 19px; }
      :host([vertical]) { flex-direction: column; width: 17px; height: auto; padding: 1px 0 2px; }
      button { flex: none; width: 13px; height: 13px; border-radius: 50%; border: 1px solid #0d0d0d; background: #3d3d3d; color: #a0a0a0; display: grid; place-items: center; }
      .track { flex: 1; align-self: stretch; display: flex; padding: 2px 0; }
      :host([vertical]) .track { padding: 0 1px; }
      .thumb { flex: none; width: 93%; border: 1px solid #0b0b0b; background: linear-gradient(#505050, #404040); }
      :host([vertical]) .thumb { width: 100%; height: 100%; background: linear-gradient(90deg, #4c4c4c, #3c3c3c); }
      i { width: 2px; height: 9px; background: #666; }
      :host([vertical]) i { width: 9px; height: 2px; }`;
  }
  html() {
    const v = this.hasAttribute('vertical');
    const icon = d => `<svg width="7" height="7" fill="currentColor" stroke="currentColor" stroke-width=".5"><path d="${d}"/></svg>`;
    return `<button aria-label="Scroll back">${icon(v ? 'M3.500 1L6 5H1Z' : 'M1 3.500L5 1V6Z')}</button>
      <div class="track"><div class="thumb"></div></div>
      <button aria-label="Scroll forward">${icon(v ? 'M3.500 6L1 2H6Z' : 'M6 3.500L2 1V6Z')}</button>
      <button aria-label="Zoom in">${icon('M0 3h7v1H0zM3 0h1v7H3z')}</button><i></i>
      <button aria-label="Zoom out">${icon('M0 3h7v1H0z')}</button>`;
  }
}

// ---------- transport ----------
class TransportBar extends UiElement {
  css() {
    return STRIP_CSS + `
      :host { height: 43px; align-items: center; padding: 0 14px 2px 5px; background: linear-gradient(#474747, #2b2b2b); border-top: 1px solid #555; color: #b0b0b0; }
      .keys { display: flex; margin-right: 1px; }
      .keys button { width: 30px; height: 31px; border: 1px solid #050505; background: linear-gradient(#505050, #3c3c3c 50%, #303030 50%, #3e3e3e); color: #ccc; }
      .keys button:first-child, .keys button:last-child { width: 28px; }
      .round { width: 31px; height: 31px; border-radius: 50%; border: 2px solid #101010; margin-left: 5px; display: grid; place-items: center; }
      .rec { background: radial-gradient(#7a3a34, #3c1412); }
      .loop { background: radial-gradient(#6f9a9a, #335556); }
      .panel { height: 32px; border: 1px solid #181818; border-bottom-color: #555; border-radius: 2px; background: linear-gradient(#3a3a3a, #2e2e2e 50%, #262626 50%, #2b2b2b); }
      .auto { width: 60px; margin-left: 7px; padding: 2px 3px; display: flex; flex-direction: column; gap: 1px; font: bold 7px/11px "Liberation Sans", sans-serif; white-space: nowrap; text-align: center; color: #9a9a9a; background: #383838; }
      .auto .chip { color: #666; height: 14px; font-weight: normal; gap: 8px; }
      .time { display: flex; align-items: center; justify-content: space-between; width: 297px; margin-left: 8px; padding: 0 5px; font-size: 14px; }
      .time strong { font: 500 21px/28px "Roboto", sans-serif; color: #a9b9c0; }
      .bpm { width: 43px; margin-left: 9px; text-align: center; font: 12px/14px "Liberation Sans", sans-serif; padding-top: 1px; }
      .sig { width: 31px; margin-left: 7px; text-align: center; line-height: 30px; }
      .rate { width: 204px; margin-left: 7px; display: flex; flex-direction: column; padding: 0 2px; font-size: 11px; }
      .rate label { display: flex; line-height: 14px; border-bottom: 1px solid #4c4c4c; }
      .rate output { flex: 1; text-align: center; }
      .rate .fader { flex: none; height: 15px; margin: 0; width: 100%; }
      .sel { margin-left: auto; display: flex; height: 22px; border: 1px solid #151515; border-bottom-color: #555; font-size: 12px; line-height: 20px; color: #c0c0c0; }
      .sel label { padding: 0 4px 0 2px; }
      .sel input { width: 66px; border: 0; border-left: 2px solid #393939; background: linear-gradient(#333, #282828); text-align: center; padding: 0; }`;
  }
  html() {
    const key = (l, d) => `<button aria-label="${l}"><svg width="14" height="12" fill="currentColor"><path d="${d}"/></svg></button>`;
    return `<div class="keys">
      ${key('Go to start', 'M1 1h2v10H1zM13 1v10L4 6z')}${key('Stop', 'M2 1h10v10H2z')}${key('Play', 'M1 1v10L13 6z')}${key('Pause', 'M2 1h3v10H2zM9 1h3v10H9z')}${key('Go to end', 'M11 1h2v10h-2zM1 1v10L10 6z')}</div>
      <button class="round rec" aria-label="Record"><svg width="14" height="14" fill="none" stroke="#b59b98" stroke-width="3"><circle cx="7" cy="7" r="4"/></svg></button>
      <button class="round loop" aria-label="Toggle repeat"><svg width="16" height="16" fill="none" stroke="#cfeaf0" stroke-width="2"><path d="M3 11A5.500 5.500 0 0 1 10 3M13 5A5.500 5.500 0 0 1 6 13"/><path d="M9 0l4 4l-5 1zM7 16l-4-4l5-1z" fill="#cfeaf0" stroke="none"/></svg></button>
      <div class="panel auto"><span>GLOBAL AUTO</span><button class="chip">${SHAPE}NONE</button></div>
      <div class="panel time"><strong>51.1.00 / 2:51.428</strong><span>[Stopped]</span></div>
      <div class="panel bpm">BPM<br>70</div><div class="panel sig">4/4</div>
      <div class="panel rate"><label for="rate">Rate:<output>1.0</output></label><input class="fader" id="rate" type="range" value="49"></div>
      <div class="sel"><label for="from">Selection:</label><input id="from" value="1.1.00"><input aria-label="Selection end" value="71.1.00"><input aria-label="Selection length" value="70.0.00"></div>`;
  }
}

// ---------- render dialog ----------
class CheckBox extends UiElement {
  css() {
    return `
      :host { display: inline-block; }
      label { display: flex; align-items: center; gap: 3px; height: 13px; white-space: nowrap; }
      input { appearance: none; flex: none; width: 13px; height: 13px; border: 1px solid #333; background: #fff; color: #222; display: grid; place-items: center; }
      input:checked::after { content: ""; width: 9px; height: 4px; margin-top: -3px; border: solid currentColor; border-width: 0 0 1px 1px; transform: rotate(-45deg); }
      :host([disabled]) label { color: #838383; }
      :host([disabled]) input { border-color: #ccc; color: #aaa; }`;
  }
  html() {
    return `<label><input type="checkbox" ${this.hasAttribute('checked') ? 'checked' : ''} ${this.hasAttribute('disabled') ? 'disabled' : ''}><slot></slot></label>`;
  }
}

class GroupBox extends UiElement {
  css() {
    return `
      :host { display: block; }
      fieldset { min-width: 0; margin: 0; border: 1px solid #dcdcdc; box-shadow: inset 0 0 0 1px #f6f6f6; padding: 4px 8px 7px; display: flex; flex-direction: column; gap: 5px; }
      legend { padding: 0 3px; height: 13px; margin-left: -3px; }`;
  }
  html() {
    const l = this.getAttribute('legend');
    return `<fieldset>${l ? `<legend>${l}</legend>` : ''}<slot></slot></fieldset>`;
  }
}

class RenderDialog extends UiElement {
  css() {
    return `
      :host { position: fixed; inset: 0; margin: auto; width: 504px; height: fit-content; border: 1px solid #4a4a4a; background: #f0f0f0; box-shadow: 0 3px 12px rgba(0,0,0,.5); color: #000; font: 11px/13px "Lato", sans-serif; }
      header { display: flex; align-items: center; gap: 5px; height: 25px; padding: 0 3px; background: #fff; font: 12px/16px "Lato", sans-serif; }
      header button { margin-left: auto; width: 24px; height: 22px; border: 0; background: none; display: grid; place-items: center; }
      form { padding: 10px 9px 12px 10px; }
      label { white-space: nowrap; }
      .row { display: flex; align-items: center; gap: 6px; }
      .btn { height: 20px; border: 1px solid #adadad; background: #e1e1e1; }
      .btn:disabled { background: #ccc; border-color: #bfbfbf; color: #838383; }
      .btn.go { border: 2px solid #0078d7; }
      select { appearance: none; height: 21px; border: 1px solid #adadad; border-radius: 0; padding: 0 20px 0 3px; background: #e1e1e1 url("data:image/svg+xml,%3Csvg xmlns='http://www.w3.org/2000/svg' width='9' height='6'%3E%3Cpath d='M.5 .5L4.500 4.500L8.500 .5' fill='none' stroke='%23555'/%3E%3C/svg%3E") no-repeat right 4px center; }
      select.edit { background-color: #fff; border-color: #7a7a7a; }
      input { height: 21px; min-width: 0; border: 1px solid #7a7a7a; background: #fff; padding: 0 2px 2px; outline: 0; font: 11px/13px "Liberation Sans", sans-serif; }
      input:disabled { border: 1px solid #ccc; box-shadow: none; background: #f0f0f0; color: #838383; }
      input:read-only { background: #f0f0f0; }
      input.name { border-color: #0078d7; background: #fff; }
      input.name::selection { background: #0078d7; color: #fff; }
      .dim { color: #a0a0a0; margin-left: -2px; }
      .paths { display: grid; grid-template-columns: 51px 1fr 64px; column-gap: 5px; row-gap: 5px; align-items: center; padding-right: 1px; }
      .paths label { text-align: right; }
      .checks { display: grid; grid-template-columns: 231px 120px 1fr; row-gap: 5px; padding: 3px 0 0 1px; }
      .space { margin-left: auto; }
      .foot { display: flex; flex-direction: column; gap: 5px; margin-top: 8px; }
      .foot > check-box { margin-bottom: 1px; }
      .foot .btn { height: 21px; }
      .foot .row.top { align-items: flex-start; }`;
  }
  html() {
    const select = (id, text, width, cls = '') => `<select id="${id}" class="${cls}" style="width:${width}px"><option>${text}</option></select>`;
    return `
      <header>${LOGO}Render to File<button aria-label="Close"><svg width="11" height="11" stroke="#000"><path d="M.5 .5L10.500 10.500M10.500 .5L.5 10.500"/></svg></button></header>
      <form>
        <div class="row" style="margin-bottom:5px">
          <label for="source" style="width:36px">Source:</label>${select('source', 'Master mix', 180)}
          <label for="bounds" style="width:40px">Bounds:</label>${select('bounds', 'Time selection', 143)}
          <button type="button" class="btn" style="flex:1">Presets</button>
        </div>
        <group-box legend="Time bounds">
          <div class="row dim">
            <label for="start" style="width:26px">Start:</label><input id="start" style="width:60px" value="0:00.000" disabled>
            <label for="end" style="width:23px">End:</label><input id="end" style="width:63px" value="4:00.000" disabled>
            <label for="length" style="width:34px">Length:</label><input id="length" style="width:60px" value="4:00.000" disabled>
            <div class="row space" style="color:#000;padding-right:8px"><check-box style="width:39px">Tail:</check-box><input aria-label="Tail length" style="width:47px" value="1000">ms</div>
          </div>
        </group-box>
        <group-box legend="Output" style="margin-top:2px">
          <div class="paths">
            <label for="dir">Directory:</label><input id="dir" value="E:\\DOCUMENTS\\My MUSIC\\2011г When I was Inn\\ГОТОВОЕ"><button type="button" class="btn">Browse...</button>
            <label for="file">File name:</label><input id="file" class="name" value="DEIMA-When I was Inn...Space"><button type="button" class="btn">Wildcards</button>
            <label for="to">Render to:</label><input id="to" readonly value="E:\\DOCUMENTS\\My MUSIC\\2011г When I was Inn\\ГОТОВОЕ\\DEIMA-When I was Inn...Space.wav"><button type="button" class="btn" disabled>1 file</button>
          </div>
        </group-box>
        <group-box legend="Options" style="margin-top:2px">
          <div class="row" style="gap:4px;margin-bottom:1px">
            <label for="rate" style="width:60px">Sample rate:</label>${select('rate', '96000', 83, 'edit')}<span style="width:17px">Hz</span>
            <label for="chan" style="width:47px">Channels:</label>${select('chan', 'Stereo', 63, 'edit')}
            <span style="width:10px"></span>${select('speed', 'Full-speed Offline', 131)}
          </div>
          <check-box checked disabled style="margin:0 0 2px 1px">Use project sample rate for mixing and FX/synth processing</check-box>
          <div class="row" style="padding-left:3px"><label for="resample" style="width:133px">Resample mode (if needed):</label>${select('resample', 'Good (192pt Sinc)', 239)}</div>
          <div class="checks">
            <check-box>Tracks with only mono media to mono files</check-box><check-box>Dither master</check-box><check-box disabled>Dither stems</check-box>
            <check-box>Multichannel tracks to multichannel files</check-box><check-box>Noise shape master</check-box><check-box disabled>Noise shape stems</check-box>
          </div>
        </group-box>
        <div class="row" style="margin:7px 0"><label for="format" style="width:69px">Output format:</label>${select('format', 'WAV', 212)}</div>
        <group-box>
          <div class="row" style="padding:3px 0 1px 3px"><label for="depth" style="width:74px">WAV bit depth:</label>${select('depth', '24 bit PCM', 113)}
            <label for="large" style="width:52px">Large files:</label>${select('large', 'Auto WAV/Wave64', 129)}</div>
          <div class="row" style="padding-left:2px"><check-box checked style="width:138px">Write BWF ('bext') chunk</check-box><check-box>Include project filename in BWF data</check-box></div>
          <div class="row" style="padding:0 0 12px 2px;gap:8px">${select('markers', 'Do not include markers or regions', 215)}<check-box>Embed project tempo (use with care)</check-box></div>
        </group-box>
        <div class="foot">
          <check-box>Silently increment filenames to avoid overwriting</check-box>
          <check-box>Add rendered items to new tracks in project</check-box>
          <div class="row top"><check-box>Save copy of project to outfile.wav.RPP</check-box><button type="button" class="btn go space" style="width:118px">Render 1 file...</button></div>
          <div class="row" style="gap:8px"><button type="button" class="btn" style="width:118px">Add to render queue</button><button type="button" class="btn" style="width:118px">Open render queue...</button><button type="button" class="btn space" style="width:142px">Save changes and close</button></div>
          <div class="row"><check-box>Delay queued render to allow samples to load</check-box><button type="button" class="btn space" style="width:63px">Cancel</button></div>
        </div>
      </form>`;
  }
  ready() {
    const $ = id => this.shadowRoot.getElementById(id);
    $('to').scrollLeft = $('to').scrollWidth;
    $('speed').setAttribute('aria-label', 'Render speed');
    $('markers').setAttribute('aria-label', 'Markers and regions');
    $('file').focus();
    $('file').select();
  }
}

// ---------- application ----------
class DawApp extends UiElement {
  css() {
    return `
      :host { display: flex; flex-direction: column; height: 100vh; }
      main { flex: 1; min-height: 0; display: grid; grid-template-columns: 343px 1fr; column-gap: 7px; background: #272727; }
      .left { display: flex; flex-direction: column; min-height: 0; border-right: 1px solid #1a1a1a; }
      track-panel { flex: 1; min-height: 0; overflow: hidden; }
      .status { height: 19px; margin-left: 5px; border-top: 1px solid #8a8a8a; color: #b4b4b4; font: 11px/16px "Liberation Sans", sans-serif; }
      .right { min-width: 0; min-height: 0; display: grid; grid-template: auto 1fr 19px / 1fr 17px; }
      time-ruler { grid-column: 1 / 3; min-width: 0; }
      .corner { background: #252525; }`;
  }
  html() {
    return `
      <title-bar>2006kombi [modified] [proj 1/2] - REAPER v5.981/x64 - Registered to PortableAppZ (Commercial license)</title-bar>
      <menu-bar></menu-bar>
      <project-tabs></project-tabs>
      <main>
        <div class="left"><tool-bar></tool-bar><track-panel></track-panel>
          <div class="status">мотив 1 куплет [items] 1 [FX] 1 (SuperWave Performer)</div></div>
        <div class="right"><time-ruler></time-ruler><arrange-view></arrange-view><scroll-strip vertical></scroll-strip><scroll-strip></scroll-strip><div class="corner"></div></div>
      </main>
      <transport-bar></transport-bar>
      <render-dialog></render-dialog>`;
  }
}

customElements.define('title-bar', TitleBar);
customElements.define('menu-bar', MenuBar);
customElements.define('project-tabs', ProjectTabs);
customElements.define('tool-bar', ToolBar);
customElements.define('master-track', MasterTrack);
customElements.define('armed-track', ArmedTrack);
customElements.define('track-row', TrackRow);
customElements.define('envelope-row', EnvelopeRow);
customElements.define('track-panel', TrackPanel);
customElements.define('time-ruler', TimeRuler);
customElements.define('arrange-view', ArrangeView);
customElements.define('scroll-strip', ScrollStrip);
customElements.define('transport-bar', TransportBar);
customElements.define('check-box', CheckBox);
customElements.define('group-box', GroupBox);
customElements.define('render-dialog', RenderDialog);
customElements.define('daw-app', DawApp);
</script>
</body>
</html>
